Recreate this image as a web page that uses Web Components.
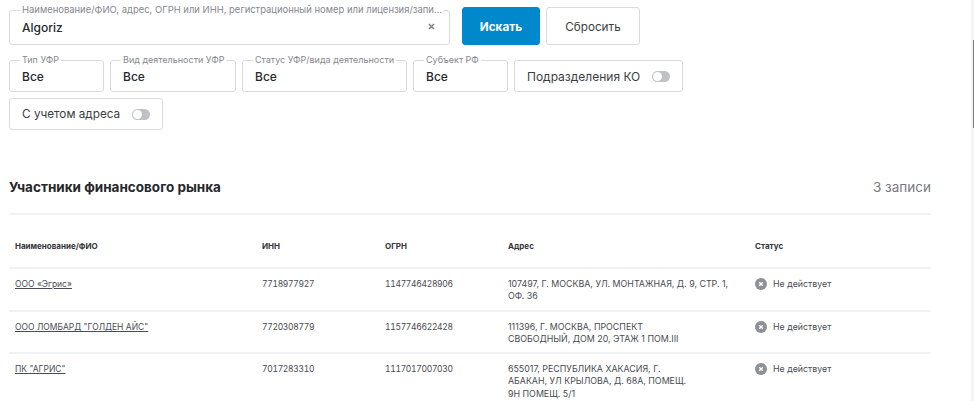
<!DOCTYPE html>
<html lang="ru">
<head>
<meta charset="utf-8">
<title>Участники финансового рынка</title>
<style>
    html, body { margin: 0; height: 100%; overflow: hidden; background: #fff; }
    body { font-family: Inter, "Noto Sans", sans-serif; color: #2b2d33; }
</style>
</head>
<body>
<search-page></search-page>

<script>
class FilterField extends HTMLElement {
    constructor() {
        super();
        this.attachShadow({ mode: 'open' });
    }

    connectedCallback() {
        const clear = this.hasAttribute('clearable')
            ? `<svg class="clear" width="7" height="7" viewBox="0 0 7 7"><path d="M1 1l5 5M6 1L1 6" stroke="#7d8087" stroke-width="1.5" fill="none"/></svg>`
            : '';
        this.shadowRoot.innerHTML = `
            <style>
                :host { display: block; box-sizing: border-box; width: var(--w); height: var(--h, 37px); }
                fieldset {
                    box-sizing: border-box;
                    width: 100%;
                    height: 100%;
                    margin: 0;
                    padding: 0 9px 0 12px;
                    border: 1px solid #d9dadd;
                    border-radius: 3px;
                    display: flex;
                    align-items: center;
                    justify-content: space-between;
                    min-width: 0;
                }
                legend {
                    font-size: var(--legend, 9px);
                    line-height: 10px;
                    color: #85888f;
                    padding: 0 2px;
                    margin-left: -2px;
                    white-space: nowrap;
                }
                .value { font-size: 12px; font-weight: 500; color: #26282d; margin-top: var(--shift, -3px); }
                .clear { margin-top: -6px; margin-right: 5px; }
            </style>
            <fieldset>
                <legend>${this.getAttribute('label')}</legend>
                <span class="value"><slot></slot></span>
                ${clear}
            </fieldset>
        `;
    }
}

class ToggleBox extends HTMLElement {
    constructor() {
        super();
        this.attachShadow({ mode: 'open' });
        this.shadowRoot.innerHTML = `
            <style>
                :host {
                    display: flex;
                    align-items: center;
                    box-sizing: border-box;
                    height: 32px;
                    padding: 0 12px;
                    gap: 12px;
                    border: 1px solid #d9dadd;
                    border-radius: 3px;
                    font-size: 12px;
                    color: #3b3d43;
                    white-space: nowrap;
                }
                .track { width: 18px; height: 11px; border-radius: 6px; background: #bfc1c6; display: flex; align-items: center; padding-left: 1px; box-sizing: border-box; }
                .knob { width: 9px; height: 9px; border-radius: 50%; background: #fff; }
            </style>
            <slot></slot>
            <span class="track"><span class="knob"></span></span>
        `;
    }
}

class ActionButton extends HTMLElement {
    constructor() {
        super();
        this.attachShadow({ mode: 'open' });
        this.shadowRoot.innerHTML = `
            <style>
                :host {
                    display: flex;
                    align-items: center;
                    justify-content: center;
                    box-sizing: border-box;
                    height: 38px;
                    width: var(--w);
                    padding-top: 1px;
                    border: 1px solid #d9dadd;
                    border-radius: 3px;
                    font-size: 11.7px;
                    color: #3b3d43;
                }
                :host([primary]) {
                    background: #0088cc;
                    border-color: #0088cc;
                    color: #fff;
                    font-weight: 700;
                }
            </style>
            <slot></slot>
        `;
    }
}

class StatusLabel extends HTMLElement {
    constructor() {
        super();
        this.attachShadow({ mode: 'open' });
        this.shadowRoot.innerHTML = `
            <style>
                :host { display: flex; align-items: center; gap: 6px; height: 12px; font-size: 8.8px; white-space: nowrap; }
                svg { flex: none; }
            </style>
            <svg width="12" height="12" viewBox="0 0 12 12">
                <circle cx="6" cy="6" r="6" fill="#8d9096"/>
                <path d="M4.2 4.2l3.6 3.6M7.8 4.2L4.2 7.8" stroke="#fff" stroke-width="1.4" fill="none"/>
            </svg>
            <slot></slot>
        `;
    }
}

class ParticipantsTable extends HTMLElement {
    constructor() {
        super();
        this.attachShadow({ mode: 'open' });
        this._rows = [
            { name: 'ООО «Эгрис»', inn: '7718977927', ogrn: '1147746428906', addr: ['107497, Г. МОСКВА, УЛ. МОНТАЖНАЯ, Д. 9, СТР. 1,', 'ОФ. 36'], h: 43 },
            { name: 'ООО ЛОМБАРД "ГОЛДЕН АЙС"', inn: '7720308779', ogrn: '1157746622428', addr: ['111396, Г. МОСКВА, ПРОСПЕКТ', 'СВОБОДНЫЙ, ДОМ 20, ЭТАЖ 1 ПОМ.III'], h: 42 },
            { name: 'ПК "АГРИС"', inn: '7017283310', ogrn: '1117017007030', addr: ['655017, РЕСПУБЛИКА ХАКАСИЯ, Г.', 'АБАКАН, УЛ КРЫЛОВА, Д. 68А, ПОМЕЩ.', '9Н ПОМЕЩ. 5/1'], h: 60 }
        ];
    }

    connectedCallback() {
        const rows = this._rows.map(r => `
            <div class="row" style="height:${r.h}px">
                <div class="name"><a>${r.name}</a></div>
                <div class="num">${r.inn}</div>
                <div class="num">${r.ogrn}</div>
                <div class="addr">${r.addr.join('<br>')}</div>
                <div><status-label>Не действует</status-label></div>
            </div>
        `).join('');

        this.shadowRoot.innerHTML = `
            <style>
                :host { display: block; width: 922px; color: #4a4c52; }
                .row, .head {
                    display: grid;
                    grid-template-columns: 247px 123px 123px 247px 1fr;
                    padding-left: 6px;
                    box-sizing: border-box;
                }
                .head {
                    height: 52px;
                    align-items: center;
                    font-size: 8px;
                    font-weight: 700;
                    color: #33353a;
                    padding-top: 10px;
                }
                .row {
                    border-top: 2px solid #f1f2f3;
                    padding-top: 9px;
                    line-height: 12.3px;
                }
                .name { font-size: 8.5px; }
                .num { font-size: 8.5px; letter-spacing: -0.3px; font-variant-numeric: tabular-nums; }
                .addr { font-size: 8.85px; }
                a { text-decoration: underline; color: #4a4c52; }
            </style>
            <div class="head">
                <div>Наименование/ФИО</div><div>ИНН</div><div>ОГРН</div><div>Адрес</div><div>Статус</div>
            </div>
            ${rows}
        `;
    }
}

class SearchPage extends HTMLElement {
    constructor() {
        super();
        this.attachShadow({ mode: 'open' });
        this.shadowRoot.innerHTML = `
            <style>
                :host { display: block; padding: 5px 0 0 9px; }
                .line { display: flex; gap: 6px; }
                .search { align-items: flex-end; margin-bottom: 10px; }
                .search filter-field { margin-right: 6px; }
                .filters { margin-bottom: 6px; align-items: flex-end; }
                .title {
                    display: flex;
                    justify-content: space-between;
                    align-items: center;
                    width: 922px;
                    height: 30px;
                    margin-top: 42px;
                    padding-bottom: 11px;
                    border-bottom: 2px solid #f1f2f3;
                }
                h2 { margin: 0; font-size: 13.5px; font-weight: 700; color: #25272b; }
                .count { font-size: 13.5px; color: #77797f; }
                .scroll { position: fixed; top: 0; right: 0; width: 3px; height: 100%; background: #f4f4f4; }
                .thumb { position: absolute; top: 40px; right: 0; width: 1px; height: 88px; background: #7b7b7b; }
            </style>
            <div class="line search">
                <filter-field style="--w:441px;--h:40px;--legend:9.45px;--shift:-5px" clearable label="Наименование/ФИО, адрес, ОГРН или ИНН, регистрационный номер или лицензия/запи...">Algoriz</filter-field>
                <action-button primary style="--w:78px">Искать</action-button>
                <action-button style="--w:94px">Сбросить</action-button>
            </div>
            <div class="line filters">
                <filter-field style="--w:95px" label="Тип УФР">Все</filter-field>
                <filter-field style="--w:126px" label="Вид деятельности УФР">Все</filter-field>
                <filter-field style="--w:165px" label="Статус УФР/вида деятельности">Все</filter-field>
                <filter-field style="--w:95px" label="Субъект РФ">Все</filter-field>
                <toggle-box>Подразделения КО</toggle-box>
            </div>
            <div class="line">
                <toggle-box style="font-size:11.75px">С учетом адреса</toggle-box>
            </div>
            <div class="title">
                <h2>Участники финансового рынка</h2>
                <span class="count">3 записи</span>
            </div>
            <participants-table></participants-table>
            <div class="scroll"><div class="thumb"></div></div>
        `;
    }
}

customElements.define('filter-field', FilterField);
customElements.define('toggle-box', ToggleBox);
customElements.define('action-button', ActionButton);
customElements.define('status-label', StatusLabel);
customElements.define('participants-table', ParticipantsTable);
customElements.define('search-page', SearchPage);
</script>
</body>
</html>
